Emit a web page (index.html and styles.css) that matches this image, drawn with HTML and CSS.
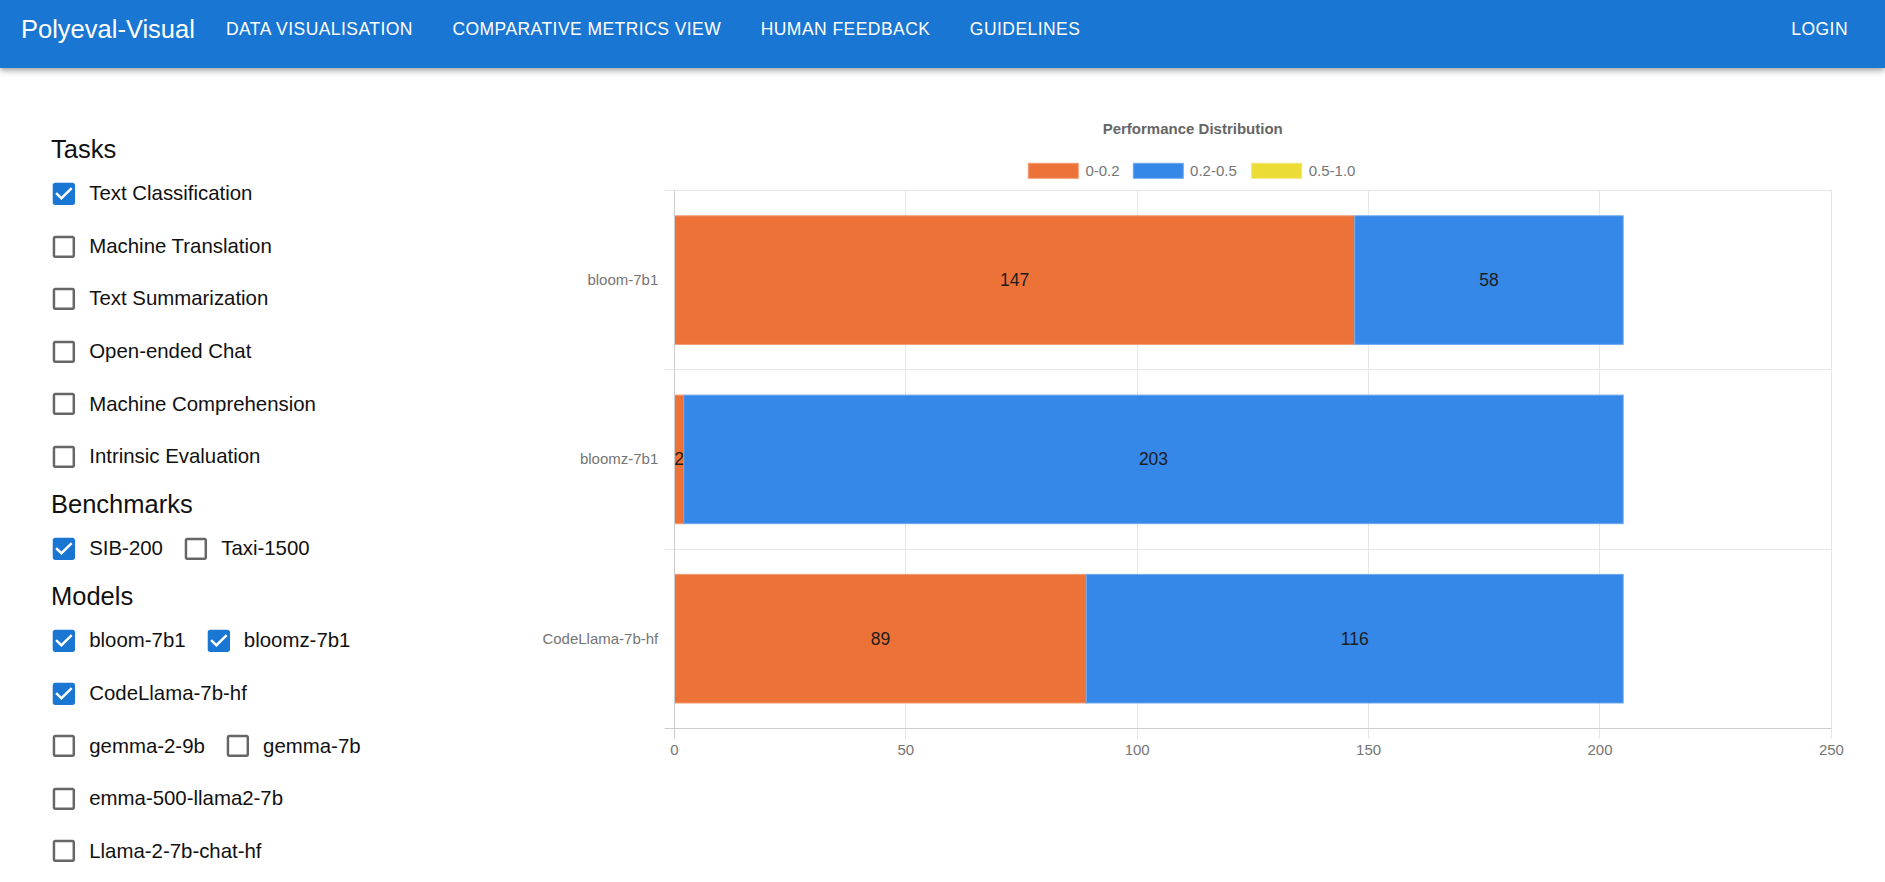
FILE: index.html
```html
<!DOCTYPE html>
<html lang="en">
<head>
<meta charset="utf-8">
<title>Polyeval-Visual</title>
<link rel="stylesheet" href="styles.css">
</head>
<body>
<header class="appbar">
  <div class="brand">Polyeval-Visual</div>
  <nav class="nav">
    <a class="nav-link">DATA VISUALISATION</a>
    <a class="nav-link">COMPARATIVE METRICS VIEW</a>
    <a class="nav-link">HUMAN FEEDBACK</a>
    <a class="nav-link">GUIDELINES</a>
  </nav>
  <a class="nav-link login">LOGIN</a>
</header>

<main class="main">
  <aside class="sidebar">
    <h2 class="group-title first">Tasks</h2>
    <div class="row"><label class="item"><svg class="cb on" viewBox="0 0 24 24"><path d="M19 3H5c-1.11 0-2 .9-2 2v14c0 1.1.89 2 2 2h14c1.11 0 2-.9 2-2V5c0-1.1-.89-2-2-2zm-9 14l-5-5 1.41-1.41L10 14.17l7.59-7.59L19 8l-9 9z"/></svg><span>Text Classification</span></label></div>
    <div class="row"><label class="item"><svg class="cb off" viewBox="0 0 24 24"><path d="M19 5v14H5V5h14m0-2H5c-1.11 0-2 .9-2 2v14c0 1.1.89 2 2 2h14c1.11 0 2-.9 2-2V5c0-1.1-.89-2-2-2z"/></svg><span>Machine Translation</span></label></div>
    <div class="row"><label class="item"><svg class="cb off" viewBox="0 0 24 24"><path d="M19 5v14H5V5h14m0-2H5c-1.11 0-2 .9-2 2v14c0 1.1.89 2 2 2h14c1.11 0 2-.9 2-2V5c0-1.1-.89-2-2-2z"/></svg><span>Text Summarization</span></label></div>
    <div class="row"><label class="item"><svg class="cb off" viewBox="0 0 24 24"><path d="M19 5v14H5V5h14m0-2H5c-1.11 0-2 .9-2 2v14c0 1.1.89 2 2 2h14c1.11 0 2-.9 2-2V5c0-1.1-.89-2-2-2z"/></svg><span>Open-ended Chat</span></label></div>
    <div class="row"><label class="item"><svg class="cb off" viewBox="0 0 24 24"><path d="M19 5v14H5V5h14m0-2H5c-1.11 0-2 .9-2 2v14c0 1.1.89 2 2 2h14c1.11 0 2-.9 2-2V5c0-1.1-.89-2-2-2z"/></svg><span>Machine Comprehension</span></label></div>
    <div class="row"><label class="item"><svg class="cb off" viewBox="0 0 24 24"><path d="M19 5v14H5V5h14m0-2H5c-1.11 0-2 .9-2 2v14c0 1.1.89 2 2 2h14c1.11 0 2-.9 2-2V5c0-1.1-.89-2-2-2z"/></svg><span>Intrinsic Evaluation</span></label></div>

    <h2 class="group-title">Benchmarks</h2>
    <div class="row">
      <label class="item"><svg class="cb on" viewBox="0 0 24 24"><path d="M19 3H5c-1.11 0-2 .9-2 2v14c0 1.1.89 2 2 2h14c1.11 0 2-.9 2-2V5c0-1.1-.89-2-2-2zm-9 14l-5-5 1.41-1.41L10 14.17l7.59-7.59L19 8l-9 9z"/></svg><span>SIB-200</span></label>
      <label class="item"><svg class="cb off" viewBox="0 0 24 24"><path d="M19 5v14H5V5h14m0-2H5c-1.11 0-2 .9-2 2v14c0 1.1.89 2 2 2h14c1.11 0 2-.9 2-2V5c0-1.1-.89-2-2-2z"/></svg><span>Taxi-1500</span></label>
    </div>

    <h2 class="group-title">Models</h2>
    <div class="row">
      <label class="item"><svg class="cb on" viewBox="0 0 24 24"><path d="M19 3H5c-1.11 0-2 .9-2 2v14c0 1.1.89 2 2 2h14c1.11 0 2-.9 2-2V5c0-1.1-.89-2-2-2zm-9 14l-5-5 1.41-1.41L10 14.17l7.59-7.59L19 8l-9 9z"/></svg><span>bloom-7b1</span></label>
      <label class="item"><svg class="cb on" viewBox="0 0 24 24"><path d="M19 3H5c-1.11 0-2 .9-2 2v14c0 1.1.89 2 2 2h14c1.11 0 2-.9 2-2V5c0-1.1-.89-2-2-2zm-9 14l-5-5 1.41-1.41L10 14.17l7.59-7.59L19 8l-9 9z"/></svg><span>bloomz-7b1</span></label>
    </div>
    <div class="row"><label class="item"><svg class="cb on" viewBox="0 0 24 24"><path d="M19 3H5c-1.11 0-2 .9-2 2v14c0 1.1.89 2 2 2h14c1.11 0 2-.9 2-2V5c0-1.1-.89-2-2-2zm-9 14l-5-5 1.41-1.41L10 14.17l7.59-7.59L19 8l-9 9z"/></svg><span>CodeLlama-7b-hf</span></label></div>
    <div class="row">
      <label class="item"><svg class="cb off" viewBox="0 0 24 24"><path d="M19 5v14H5V5h14m0-2H5c-1.11 0-2 .9-2 2v14c0 1.1.89 2 2 2h14c1.11 0 2-.9 2-2V5c0-1.1-.89-2-2-2z"/></svg><span>gemma-2-9b</span></label>
      <label class="item"><svg class="cb off" viewBox="0 0 24 24"><path d="M19 5v14H5V5h14m0-2H5c-1.11 0-2 .9-2 2v14c0 1.1.89 2 2 2h14c1.11 0 2-.9 2-2V5c0-1.1-.89-2-2-2z"/></svg><span>gemma-7b</span></label>
    </div>
    <div class="row"><label class="item"><svg class="cb off" viewBox="0 0 24 24"><path d="M19 5v14H5V5h14m0-2H5c-1.11 0-2 .9-2 2v14c0 1.1.89 2 2 2h14c1.11 0 2-.9 2-2V5c0-1.1-.89-2-2-2z"/></svg><span>emma-500-llama2-7b</span></label></div>
    <div class="row"><label class="item"><svg class="cb off" viewBox="0 0 24 24"><path d="M19 5v14H5V5h14m0-2H5c-1.11 0-2 .9-2 2v14c0 1.1.89 2 2 2h14c1.11 0 2-.9 2-2V5c0-1.1-.89-2-2-2z"/></svg><span>Llama-2-7b-chat-hf</span></label></div>
  </aside>

  <section class="chart-area">
    <svg class="chart" width="1385" height="720" viewBox="0 0 1385 720">
      <text class="ch-title" x="692.7" y="65.7" text-anchor="middle">Performance Distribution</text>

      <rect class="sw-o" x="528.3" y="95.3" width="50" height="15"/>
      <text class="ch-legend" x="585.4" y="107.8">0-0.2</text>
      <rect class="sw-b" x="633.3" y="95.3" width="50" height="15"/>
      <text class="ch-legend" x="690.1" y="107.8">0.2-0.5</text>
      <rect class="sw-y" x="751.7" y="95.3" width="50" height="15"/>
      <text class="ch-legend" x="808.7" y="107.8">0.5-1.0</text>

      <line class="grid" x1="164.5" y1="122.5" x2="1331.5" y2="122.5"/>
      <line class="grid" x1="164.5" y1="301.5" x2="1331.5" y2="301.5"/>
      <line class="grid" x1="164.5" y1="481.5" x2="1331.5" y2="481.5"/>
      <line class="grid" x1="405.5" y1="122.5" x2="405.5" y2="670.5"/>
      <line class="grid" x1="637.5" y1="122.5" x2="637.5" y2="670.5"/>
      <line class="grid" x1="868.5" y1="122.5" x2="868.5" y2="670.5"/>
      <line class="grid" x1="1099.5" y1="122.5" x2="1099.5" y2="670.5"/>
      <line class="grid" x1="1331.5" y1="122.5" x2="1331.5" y2="670.5"/>

      <rect class="bar-o" x="174.5" y="147.8" width="680.3" height="128.6"/>
      <rect class="bar-b" x="854.8" y="147.8" width="268.4" height="128.6"/>
      <rect class="bar-o" x="174.5" y="327.1" width="9.3" height="128.6"/>
      <rect class="bar-b" x="183.8" y="327.1" width="939.4" height="128.6"/>
      <rect class="bar-o" x="174.5" y="506.4" width="411.9" height="128.6"/>
      <rect class="bar-b" x="586.4" y="506.4" width="536.8" height="128.6"/>

      <line class="axis" x1="174.5" y1="122.5" x2="174.5" y2="670.5"/>
      <line class="axis" x1="164.5" y1="660.5" x2="1331.5" y2="660.5"/>

      <text class="ch-val" x="514.6" y="218.1" text-anchor="middle">147</text>
      <text class="ch-val" x="989" y="218.1" text-anchor="middle">58</text>
      <text class="ch-val" x="179.1" y="397.4" text-anchor="middle">2</text>
      <text class="ch-val" x="653.5" y="397.4" text-anchor="middle">203</text>
      <text class="ch-val" x="380.4" y="576.7" text-anchor="middle">89</text>
      <text class="ch-val" x="854.8" y="576.7" text-anchor="middle">116</text>

      <text class="ch-label" x="158.3" y="217.1" text-anchor="end">bloom-7b1</text>
      <text class="ch-label" x="158.3" y="396.4" text-anchor="end">bloomz-7b1</text>
      <text class="ch-label" x="158.3" y="575.7" text-anchor="end">CodeLlama-7b-hf</text>

      <text class="ch-label" x="174.4" y="687" text-anchor="middle">0</text>
      <text class="ch-label" x="405.8" y="687" text-anchor="middle">50</text>
      <text class="ch-label" x="637.2" y="687" text-anchor="middle">100</text>
      <text class="ch-label" x="868.6" y="687" text-anchor="middle">150</text>
      <text class="ch-label" x="1100" y="687" text-anchor="middle">200</text>
      <text class="ch-label" x="1331.4" y="687" text-anchor="middle">250</text>
    </svg>
  </section>
</main>
</body>
</html>
```

FILE: styles.css
```css
* {
  box-sizing: border-box;
}

html, body {
  margin: 0;
  padding: 0;
  background: #ffffff;
}

body {
  font-family: "Liberation Sans", Arial, sans-serif;
  color: #212121;
  overflow: hidden;
}

/* ---------- App bar ---------- */
.appbar {
  position: relative;
  z-index: 2;
  display: flex;
  align-items: flex-start;
  height: 68px;
  padding: 13.5px 37px 0 21px;
  background: #1976d2;
  color: #ffffff;
  box-shadow: 0 2px 4px -1px rgba(0, 0, 0, 0.2),
              0 4px 5px 0 rgba(0, 0, 0, 0.14),
              0 1px 10px 0 rgba(0, 0, 0, 0.12);
}

.brand {
  font-size: 25.5px;
  line-height: 30px;
  margin-right: 31px;
  white-space: nowrap;
}

.nav {
  display: flex;
  gap: 39.5px;
  flex: 1;
}

.nav-link {
  display: block;
  margin-top: 5px;
  font-size: 17.5px;
  line-height: 20px;
  letter-spacing: 0.45px;
  color: #ffffff;
  white-space: nowrap;
  cursor: pointer;
}

/* ---------- Main layout ---------- */
.main {
  display: flex;
  height: 814px;
}

.sidebar {
  width: 500px;
  flex: 0 0 500px;
  padding: 66.5px 0 0 49px;
}

.group-title {
  margin: 6.5px 0 5px;
  padding-left: 2px;
  font-size: 25.5px;
  line-height: 28px;
  font-weight: 400;
  color: #111111;
}

.group-title.first {
  margin-top: 0;
}

.row {
  display: flex;
  align-items: center;
  gap: 18px;
  height: 52.6px;
}

.item {
  display: flex;
  align-items: center;
  gap: 10.5px;
  font-size: 20.4px;
  color: #111111;
  white-space: nowrap;
  cursor: pointer;
}

.cb {
  width: 29.76px;
  height: 29.76px;
  flex: 0 0 auto;
  display: block;
}

.cb.on {
  fill: #1976d2;
}

.cb.off {
  fill: rgba(0, 0, 0, 0.6);
}

/* ---------- Chart ---------- */
.chart-area {
  flex: 1;
}

.chart {
  display: block;
}

.ch-title {
  font-family: "Liberation Sans", Arial, sans-serif;
  font-size: 15px;
  font-weight: 700;
  fill: #666666;
}

.ch-legend,
.ch-label {
  font-family: "Liberation Sans", Arial, sans-serif;
  font-size: 15px;
  fill: #757575;
}

.ch-val {
  font-family: "Liberation Sans", Arial, sans-serif;
  font-size: 17.5px;
  fill: #1e1e1e;
}

.grid {
  stroke: #e6e6e6;
  stroke-width: 1;
}

.axis {
  stroke: #cccccc;
  stroke-width: 1;
}

.bar-o,
.sw-o {
  fill: #ec7237;
  stroke: #f29a70;
  stroke-width: 1;
}

.bar-b,
.sw-b {
  fill: #3587e8;
  stroke: #6ea9f0;
  stroke-width: 1;
}

.sw-y {
  fill: #ecdc36;
  stroke: #f2e77a;
  stroke-width: 1;
}
```
